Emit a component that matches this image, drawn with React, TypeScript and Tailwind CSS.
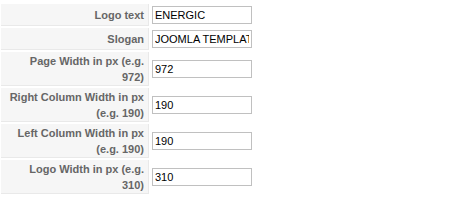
const rows = [
  { label: "Logo text", value: "ENERGIC" },
  { label: "Slogan", value: "JOOMLA TEMPLATE" },
  { label: "Page Width in px (e.g. 972)", value: "972" },
  { label: "Right Column Width in px (e.g. 190)", value: "190" },
  { label: "Left Column Width in px (e.g. 190)", value: "190" },
  { label: "Logo Width in px (e.g. 310)", value: "310" },
]

export default function App() {
  return (
    <div className="h-[200px] w-[451px] bg-white pt-[4px] pl-[1px] font-['Liberation_Sans',Arial,sans-serif]">
      <div className="flex flex-col gap-[2px]">
        {rows.map((row) => (
          <div key={row.label} className="flex">
            {/* label cell */}
            <div className="flex w-[148px] items-center justify-end border-r border-b border-[#e9e9e9] bg-[#f6f6f6] pt-[1px] pr-[4px] pl-[6px] text-right text-[11px] leading-[16px] font-bold text-[#666666]">
              <span>{row.label}</span>
            </div>
            {/* value cell */}
            <div className="flex items-center py-[2px] pl-[3px]">
              <input
                type="text"
                defaultValue={row.value}
                className="h-[18px] w-[100px] border border-[#c0c0c0] bg-white px-[2px] text-[11px] text-black outline-none"
              />
            </div>
          </div>
        ))}
      </div>
    </div>
  )
}
